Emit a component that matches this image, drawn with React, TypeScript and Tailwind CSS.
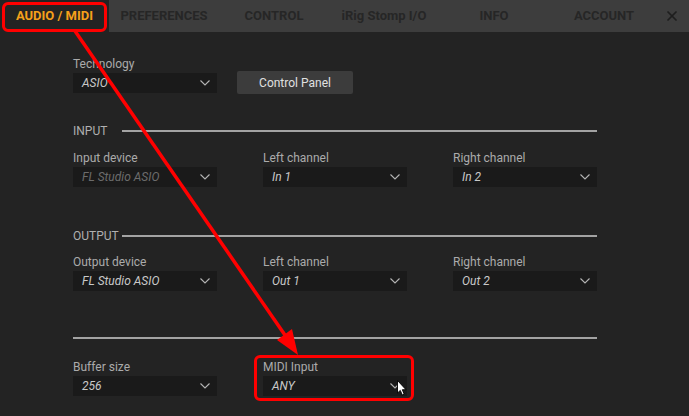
import { X } from "lucide-react";

const tabs = ["PREFERENCES", "CONTROL", "iRig Stomp I/O", "INFO", "ACCOUNT"];

function Chevron() {
  return (
    <svg width="10" height="6" viewBox="0 0 10 6" className="shrink-0">
      <path d="M0.5 0.5 L5 5 L9.5 0.5" fill="none" stroke="#b5b5b5" strokeWidth="1.1" />
    </svg>
  );
}

function Field({ label, value, disabled }: { label: string; value: string; disabled?: boolean }) {
  return (
    <div className="flex flex-col w-[144px]">
      <span className="text-[12px] leading-[16px] text-[#ababab] mb-[1px]">{label}</span>
      <div className="h-[20px] bg-[#1a1a1a] flex items-center justify-between pl-[9px] pr-[7px]">
        <span className={`text-[12px] italic ${disabled ? "text-[#6c6c6c]" : "text-[#c9c9c9]"}`}>{value}</span>
        <Chevron />
      </div>
    </div>
  );
}

function Section({ title }: { title: string }) {
  return (
    <div className="flex items-center h-[16px] w-[524px]">
      <span className="w-[49px] text-[12px] text-[#b0b0b0]">{title}</span>
      <div className="flex-1 h-[2px] bg-[#a3a3a3]" />
    </div>
  );
}

export default function App() {
  return (
    <div
      className="relative w-[689px] h-[416px] bg-[#232323] overflow-hidden"
      style={{ fontFamily: "Roboto, 'Liberation Sans', sans-serif" }}
    >
      {/* Tabs */}
      <div className="flex h-[32px] bg-[#3d3d3d] items-stretch">
        <div className="w-[109px] bg-[#232323] flex items-center justify-center text-[13px] font-bold text-[#f5a01a]">
          AUDIO / MIDI
        </div>
        {tabs.map((t) => (
          <div key={t} className="w-[110px] flex items-center justify-center text-[13px] font-bold text-[#262626]">
            {t}
          </div>
        ))}
        <div className="flex-1 flex items-center justify-center pr-[5px]">
          <X size={16} strokeWidth={2.6} color="#1e1e1e" />
        </div>
      </div>

      {/* Content */}
      <div className="pl-[73px] pt-[24px] flex flex-col">
        <div className="flex items-end gap-[20px]">
          <Field label="Technology" value="ASIO" />
          <button className="w-[116px] h-[23px] mb-[-1px] bg-[#3c3c3c] rounded-[2px] text-[12px] text-[#e0e0e0]">
            Control Panel
          </button>
        </div>

        <div className="mt-[30px]">
          <Section title="INPUT" />
        </div>
        <div className="mt-[11px] grid grid-cols-[144px_144px_144px] gap-x-[46px]">
          <Field label="Input device" value="FL Studio ASIO" disabled />
          <Field label="Left channel" value="In 1" />
          <Field label="Right channel" value="In 2" />
        </div>

        <div className="mt-[41px]">
          <Section title="OUTPUT" />
        </div>
        <div className="mt-[10px] grid grid-cols-[144px_144px_144px] gap-x-[46px]">
          <Field label="Output device" value="FL Studio ASIO" />
          <Field label="Left channel" value="Out 1" />
          <Field label="Right channel" value="Out 2" />
        </div>

        <div className="mt-[46px] w-[524px] h-[2px] bg-[#a3a3a3]" />

        <div className="mt-[20px] grid grid-cols-[144px_144px_144px] gap-x-[46px]">
          <Field label="Buffer size" value="256" />
          <Field label="MIDI Input" value="ANY" />
        </div>
      </div>

      {/* Annotations */}
      <div className="absolute left-[2px] top-[2px] w-[105px] h-[30px] border-[3px] border-[#ff0000] rounded-[6px]" />
      <div className="absolute left-[254px] top-[355px] w-[160px] h-[46px] border-[3px] border-[#ff0000] rounded-[6px]" />
      <svg className="absolute left-0 top-0" width="689" height="416" viewBox="0 0 689 416">
        <line x1="75" y1="31" x2="287" y2="338" stroke="#ff0000" strokeWidth="3.5" />
        <polygon points="298,355 277,340 292,329" fill="#ff0000" />
        <path
          d="M397.5 380.5 L397.5 393 L400.3 390.4 L402.3 395 L404.2 394.2 L402.3 389.7 L406 389.7 Z"
          fill="#ffffff"
          stroke="#000000"
          strokeWidth="0.9"
          strokeLinejoin="round"
        />
      </svg>
    </div>
  );
}
